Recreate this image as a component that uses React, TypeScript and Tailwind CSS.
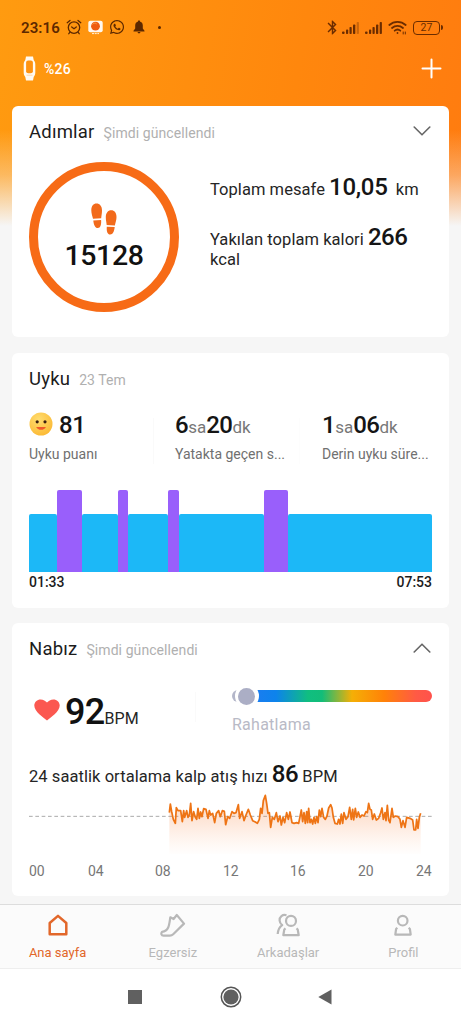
import type { ReactNode } from 'react';
import { FaWhatsapp } from 'react-icons/fa';
import { MdBluetooth } from 'react-icons/md';

/* Heart-rate samples in thirds of a pixel: [x, y]. */
const PULSE: [number, number][] = [
  [421, 62], [424, 36], [428, 59], [433, 82], [439, 94], [442, 47], [447, 56], [455, 56], [460, 89], [464, 56],
  [467, 76], [473, 56], [477, 76], [481, 69], [485, 34], [489, 86], [494, 59], [499, 76], [503, 82], [507, 49],
  [511, 79], [515, 60], [519, 74], [524, 50], [531, 52], [537, 79], [541, 56], [545, 69], [551, 64], [557, 92],
  [562, 64], [569, 56], [574, 74], [580, 56], [586, 58], [590, 98], [596, 74], [602, 79], [609, 59], [615, 64],
  [621, 62], [628, 38], [632, 79], [639, 59], [645, 86], [651, 69], [658, 52], [664, 69], [671, 86], [679, 90],
  [685, 94], [691, 82], [695, 49], [699, 64], [703, 26], [709, 10], [713, 34], [717, 64], [721, 62], [725, 106],
  [730, 76], [736, 82], [742, 62], [747, 89], [753, 72], [757, 99], [762, 76], [767, 92], [773, 62], [778, 82],
  [783, 60], [789, 92], [795, 94], [803, 92], [809, 94], [813, 74], [817, 54], [821, 89], [825, 62], [829, 94],
  [833, 59], [836, 92], [839, 49], [843, 92], [847, 82], [851, 96], [855, 76], [859, 94], [863, 74], [867, 92],
  [871, 54], [875, 74], [879, 49], [884, 76], [889, 82], [894, 72], [899, 48], [905, 38], [909, 48], [913, 76],
  [918, 94], [925, 96], [929, 82], [933, 96], [937, 66], [941, 94], [945, 62], [951, 82], [957, 74], [962, 46],
  [967, 82], [971, 52], [974, 84], [979, 49], [983, 76], [988, 60], [993, 76], [999, 69], [1005, 72], [1011, 59],
  [1015, 62], [1019, 34], [1023, 52], [1027, 54], [1031, 82], [1036, 66], [1042, 84], [1049, 79], [1055, 62],
  [1059, 48], [1063, 82], [1068, 62], [1071, 86], [1075, 40], [1079, 84], [1083, 92], [1089, 49], [1093, 76],
  [1099, 72], [1107, 74], [1113, 82], [1117, 106], [1122, 86], [1128, 106], [1133, 76], [1143, 79], [1148, 82],
  [1151, 84], [1155, 114], [1160, 114], [1163, 82], [1167, 109], [1171, 76], [1175, 64],
];
const PULSE_LINE = 'M' + PULSE.map(([x, y]) => `${x} ${y}`).join('L');

function Signal({ dim = false }: { dim?: boolean }) {
  return (
    <svg width="18" height="14" viewBox="0 0 18 14" fill="#6b2c00">
      <rect x="0" y="10.5" width="2.6" height="2.5" rx="1" />
      <rect x="4" y="8.5" width="2.2" height="4.5" rx=".8" />
      <rect x="7.5" y="6" width="2.2" height="7" rx=".8" />
      <rect x="11" y="3.5" width="2.3" height="9.5" rx=".8" />
      <rect x="14.7" y="1" width="2.2" height="12" rx=".8" opacity={dim ? 0.35 : 1} />
    </svg>
  );
}

function StatusBar() {
  return (
    <div className="flex h-[54px] items-center pl-[21px] pr-[18px] pt-px text-[#5c2800]">
      <span className="w-[45px] text-[15px] font-semibold leading-5 tracking-[0.1px]">23:16</span>
      <svg className="-mt-px" width="16" height="16" viewBox="0 0 16 16" fill="none" stroke="#5c2800" strokeWidth="1.3" strokeLinecap="round">
        <circle cx="8" cy="8.6" r="5.7" />
        <path d="M1.2 3.7 4 1.5M14.8 3.7 12 1.5M5.7 8l2.3 1.7L10.3 8M4 13.2l-1.2 1.5M12 13.2l1.2 1.5" />
      </svg>
      <svg className="ml-[6px] -mt-px" width="15" height="15" viewBox="0 0 15 15">
        <rect x=".3" y=".8" width="14.4" height="11.4" rx="2" fill="#fff7ee" />
        <circle cx="7.5" cy="6.2" r="4.4" fill="#ee5a12" />
        <path d="M4.5 4.5c1-1.6 3-1.8 4.2-.6" stroke="#ffa24a" fill="none" />
        <path d="M4 13.6h7" stroke="#fff0dd" strokeWidth="1" strokeDasharray="2 .7" />
      </svg>
      <FaWhatsapp size={16} className="ml-[6px] -mt-px" />
      <svg className="ml-[8px] -mt-px" width="12" height="14" viewBox="0 0 12 14" fill="#5c2800">
        <path d="M6 .5c.8 0 1.200.5 1.200 1.200C9 2.200 9.800 3.600 9.800 5.400v3.200L11.500 10.800v.6H.5v-.6l1.700-2.200V5.400C2.200 3.600 3 2.200 4.800 1.700 4.800 1 5.200.5 6 .5ZM4.500 12.100h3c-.2.900-.8 1.400-1.500 1.400s-1.300-.5-1.500-1.400Z" />
      </svg>
      <span className="ml-[13px] size-[3px] rounded-full bg-[#5c2800]" />
      <div className="ml-auto flex items-center">
        <MdBluetooth size={17} color="#6b2c00" />
        <span className="ml-[1px]"><Signal dim /></span>
        <span className="ml-[5px]"><Signal /></span>
        <svg className="ml-[5px]" width="19" height="15" viewBox="0 0 19 15" fill="none" stroke="#6b2c00" strokeWidth="1.8" strokeLinecap="round">
          <path d="M1.300 5c4.700-4.300 11.700-4.300 16.400 0M4 8c3.200-2.900 7.800-2.900 11 0M6.700 10.700c1.700-1.500 3.900-1.500 5.600 0" />
          <circle cx="9.500" cy="13" r=".9" fill="#6b2c00" stroke="none" />
          <path d="M15.200 12v2M17.300 12v2" strokeWidth="1" />
        </svg>
        <span className="ml-[6px] flex h-[14px] w-[27px] items-center justify-center rounded-[4px] border-[1.500px] border-[#6b2c00] text-[10.500px] leading-[10px] text-[#6b2c00]">27</span>
        <span className="ml-px h-[5px] w-[2px] rounded-r-sm bg-[#6b2c00]" />
      </div>
    </div>
  );
}

function Header() {
  return (
    <div className="flex h-[28px] items-center pl-[23px] pr-[19px]">
      <svg width="13" height="25" viewBox="0 0 13 25">
        <path d="M3 .5h7l.7 3.500C12 5.500 12.300 7 12.300 9v7c0 2-.3 3.500-1.600 5L10 24.500H3L2.300 21C1 19.500.7 18 .7 16V9c0-2 .3-3.500 1.600-5Z" fill="#fffaf2" />
        <rect x="3.100" y="4.500" width="6.800" height="12.700" rx="2" fill="#ff9412" />
        <path d="M3.500 19.200h6" stroke="#ffcf96" strokeWidth=".8" />
      </svg>
      <span className="ml-[8px] mt-[2px] text-[14px] font-medium leading-5 tracking-[0.2px] text-white">%26</span>
      <svg className="ml-auto" width="21" height="21" viewBox="0 0 21 21" stroke="#fff" strokeWidth="2" strokeLinecap="round">
        <path d="M10.500 1.500v18M1.500 10.500h18" />
      </svg>
    </div>
  );
}

function CardHeader({ title, note, chevron }: { title: string; note: string; chevron?: 'up' | 'down' }) {
  return (
    <div className="flex h-5 items-center">
      <div className="flex items-baseline">
        <h2 className="text-[18.500px] leading-5 tracking-[0.2px] text-[#1c1c1c]">{title}</h2>
        <span className="ml-[9px] text-[14px] leading-5 tracking-[0.080px] text-[#b0b0b0]">{note}</span>
      </div>
      {chevron && (
        <svg className="-mt-[2px] ml-auto mr-[1px]" width="18" height="10" viewBox="0 0 18 10" fill="none" stroke="#666" strokeWidth="1.600" strokeLinecap="round" strokeLinejoin="round">
          <path d={chevron === 'down' ? 'M1.200 1 9 8.800 16.800 1' : 'M1.200 9 9 1.200 16.800 9'} />
        </svg>
      )}
    </div>
  );
}

function StepsCard() {
  return (
    <section className="h-[231px] rounded-[6px] bg-white px-[17px] pt-4">
      <CardHeader title="Adımlar" note="Şimdi güncellendi" chevron="down" />
      <div className="mt-5 flex gap-[31px]">
        <div className="flex size-[150px] shrink-0 flex-col items-center rounded-full border-[9px] border-[#f76b16] pt-[32px]">
          <svg width="26" height="32" viewBox="0 0 26 32" fill="#f26a1b">
            <path d="M5.500.500C8.800.500 11 3.200 11 7.500c0 3-.6 5.400-.8 7.700L2 15.700C1.400 13 .3 10.500.3 7.300.3 3 2.400.500 5.500.500ZM2.300 17.400l7.800-.4c.4 4.500-.6 8-3.300 8-2.800 0-4.100-3.500-4.500-7.600Z" />
            <path d="M20.200 7.200c3.200 0 5.300 2.600 5.300 6.900 0 3.100-1 5.600-1.600 8.300l-8.200-.5c-.2-2.300-.9-4.700-.9-7.700 0-4.300 2.100-7 5.400-7ZM15.800 23.700l7.900.4c-.4 4-1.700 7.500-4.500 7.500-2.700 0-3.800-3.400-3.400-7.900Z" />
          </svg>
          <span className="mt-[5px] text-[28.500px] font-medium leading-8 tracking-[-0.4px] text-[#111]">15128</span>
        </div>
        <div className="pt-[15px] text-[16.500px] leading-5 tracking-[0.050px] text-[#252525]">
          <p className="whitespace-nowrap">
            Toplam mesafe <span className="text-[24px] font-medium leading-5 tracking-[-0.300px] text-[#151515]">10,05</span>&nbsp; km
          </p>
          <p className="mt-[27px]">
            Yakılan toplam kalori <span className="text-[24px] font-medium leading-5 tracking-[-0.500px] text-[#151515]">266</span>
            <br />
            kcal
          </p>
        </div>
      </div>
    </section>
  );
}

function Stat({ label, children }: { label: string; children: ReactNode }) {
  return (
    <div>
      <div className="flex h-7 items-baseline text-[24px] font-medium leading-7 tracking-[-0.500px] text-[#151515]">{children}</div>
      <div className="mt-[5px] whitespace-nowrap text-[14px] leading-5 text-[#707070]">{label}</div>
    </div>
  );
}

function Unit({ children }: { children: string }) {
  return <span className="text-[17px] font-normal tracking-normal text-[#777]">{children}</span>;
}

function Smiley() {
  return (
    <svg className="-mt-[2px] mr-[6px] self-center" width="24" height="24" viewBox="0 0 24 24">
      <defs>
        <radialGradient id="face" cx=".4" cy=".3" r=".8">
          <stop offset="0" stopColor="#ffdd70" />
          <stop offset="1" stopColor="#fbb62f" />
        </radialGradient>
      </defs>
      <circle cx="12" cy="12" r="11.500" fill="url(#face)" />
      <circle cx="8.200" cy="9.800" r="1.600" fill="#3b1f10" />
      <circle cx="16" cy="9.800" r="1.600" fill="#3b1f10" />
      <path d="M7.200 15h9.700c-.8 1.900-2.600 2.800-4.800 2.800S8 16.900 7.200 15Z" fill="#ef5a2a" />
    </svg>
  );
}

function SleepCard() {
  return (
    <section className="mt-4 h-[255px] rounded-[6px] bg-white px-[17px] pt-4">
      <CardHeader title="Uyku" note="23 Tem" />
      <div className="mt-[22px] grid grid-cols-[124px_22px_124px_23px_1fr]">
        <Stat label="Uyku puanı"><Smiley />81</Stat>
        <span className="mt-[7px] h-[46px] w-px bg-[#fafafa]" />
        <Stat label="Yatakta geçen s...">6<Unit>sa</Unit>20<Unit>dk</Unit></Stat>
        <span className="mt-[7px] h-[46px] w-px bg-[#fdfdfd]" />
        <Stat label="Derin uyku süre...">1<Unit>sa</Unit>06<Unit>dk</Unit></Stat>
      </div>
      <div className="mt-[26px] flex h-[82px] items-end">
        <span className="h-[58.500px] w-[27.500px] rounded-t-[2px] bg-[#1cb8f7]" />
        <span className="h-full w-[25.500px] rounded-t-[2px] bg-[#995ffb]" />
        <span className="h-[58.500px] w-[36px] rounded-t-[2px] bg-[#1cb8f7]" />
        <span className="h-full w-[10px] rounded-t-[2px] bg-[#995ffb]" />
        <span className="h-[58.500px] w-[40px] rounded-t-[2px] bg-[#1cb8f7]" />
        <span className="h-full w-[11px] rounded-t-[2px] bg-[#995ffb]" />
        <span className="h-[58.500px] w-[84.500px] rounded-t-[2px] bg-[#1cb8f7]" />
        <span className="h-full w-[24.500px] rounded-t-[2px] bg-[#995ffb]" />
        <span className="h-[58.500px] flex-1 rounded-t-[2px] bg-[#1cb8f7]" />
      </div>
      <div className="flex justify-between text-[14px] font-medium leading-5 text-[#1c1c1c]">
        <span>01:33</span>
        <span>07:53</span>
      </div>
    </section>
  );
}

function PulseCard() {
  return (
    <section className="mt-[15px] h-[273px] rounded-[6px] bg-white px-[17px] pt-4">
      <CardHeader title="Nabız" note="Şimdi güncellendi" chevron="up" />
      <div className="mt-[33px] flex h-10">
        <div className="flex w-[166px] items-baseline pl-[5px]">
          <svg className="mr-[5px]" width="26" height="26" viewBox="0 0 26 26">
            <path d="M13 22.600C9.500 19.500.3 13.800.3 7.600.3 3.900 3.200 1.400 6.600 1.400c2.700 0 5 1.300 6.400 3.200 1.400-1.900 3.700-3.200 6.400-3.200 3.400 0 6.300 2.500 6.300 6.200 0 6.200-9.200 11.900-12.700 15Z" fill="#fb5850" />
          </svg>
          <span className="text-[36px] font-medium leading-10 tracking-[-0.700px] text-[#111]">92</span>
          <span className="text-[16px] leading-5 tracking-[0.100px] text-[#252525]">BPM</span>
        </div>
        <span className="h-[30px] w-px bg-[#fafafa]" />
        <div className="ml-auto w-[200px]">
          <div className="relative -mt-[2px] h-[12px] rounded-full bg-[linear-gradient(90deg,#b3b6c9_0,#b3b6c9_6%,#1a7df0_12%,#0d83ec_22%,#10be80_38%,#12bd79_45%,#f5af06_60%,#ff8208_76%,#ff5a45_92%,#ff524c_100%)]">
            <span className="absolute -top-[6px] left-[2.500px] flex size-[24px] items-center justify-center rounded-full bg-white">
              <span className="size-[17px] rounded-full bg-[#abaec5]" />
            </span>
          </div>
          <div className="mt-[13px] text-[16px] leading-5 tracking-[0.250px] text-[#b9bac6]">Rahatlama</div>
        </div>
      </div>
      <p className="mt-8 h-[28px] whitespace-nowrap text-[16.500px] leading-5 tracking-[0.060px] text-[#252525]">
        24 saatlik ortalama kalp atış hızı <span className="text-[24px] font-medium leading-5 tracking-[-0.400px] text-[#151515]">86</span> BPM
      </p>
      <svg className="block" width="404" height="62" viewBox="0 0 1212 186">
        <defs>
          <linearGradient id="pulse" x1="0" y1="0" x2="0" y2="1">
            <stop offset="0" stopColor="#f26a12" stopOpacity=".3" />
            <stop offset=".45" stopColor="#f88a4a" stopOpacity=".2" />
            <stop offset="1" stopColor="#ffb080" stopOpacity="0" />
          </linearGradient>
        </defs>
        <path d="M0 73H1209" stroke="#aaa" strokeWidth="3" strokeDasharray="11 8" />
        <path d={`${PULSE_LINE}V194H421Z`} fill="url(#pulse)" />
        <path d={PULSE_LINE} fill="none" stroke="#ee7415" strokeWidth="5.200" strokeLinejoin="round" />
      </svg>
      <div className="mt-[7px] grid grid-cols-[59px_67px_68px_67px_68px_58px_1fr] text-[14px] leading-5 text-[#777]">
        <span>00</span><span>04</span><span>08</span><span>12</span><span>16</span><span>20</span><span>24</span>
      </div>
    </section>
  );
}

function Tab({ label, active = false, children }: { label: string; active?: boolean; children: ReactNode }) {
  return (
    <div className={active ? 'flex flex-1 flex-col items-center text-[#e2672a]' : 'flex flex-1 flex-col items-center text-[#b8b8b8]'}>
      <svg className="mt-2" width="26" height="26" viewBox="0 0 26 26" fill="none" stroke="currentColor" strokeWidth="2.200" strokeLinejoin="round">
        {children}
      </svg>
      <span className="mt-1 text-[13px] leading-5">{label}</span>
    </div>
  );
}

export default function App() {
  return (
    <div className="flex h-[1024px] w-[461px] flex-col overflow-hidden bg-[#f6f6f6] font-['Roboto','Noto_Sans',sans-serif]">
      <div className="flex flex-1 flex-col bg-[linear-gradient(180deg,rgba(246,246,246,0)_130px,rgba(246,246,246,0.35)_175px,#f6f6f6_226px),linear-gradient(100deg,#ff9b10_0%,#ff870d_50%,#ff7411_100%)]">
        <StatusBar />
        <Header />
        <main className="mt-6 px-3">
          <StepsCard />
          <SleepCard />
          <PulseCard />
        </main>
      </div>
      <nav className="flex h-[65px] border-b border-t border-b-[#eeeeee] border-t-[#dddddd] bg-[#fbfbfb]">
        <Tab label="Ana sayfa" active>
          <path d="M4.700 21.300V10L13 2.900l8.300 7.100v11.300Z" strokeWidth="2.500" />
        </Tab>
        <Tab label="Egzersiz">
          <path d="M10.300 4.300 13.600 6 16.800 2 24 10.600 13.200 21.200C12.200 22.200 11.300 22.600 9.800 22.600H3.500C1.300 22.600.8 20.500 2 18.800 5 18.600 7 17.200 8.200 14.500 9.300 12 9.600 9 10.300 4.300Z" />
        </Tab>
        <Tab label="Arkadaşlar">
          <circle cx="16" cy="7.900" r="5" />
          <path d="M10.500 15.400 9.300 16.500 8.300 22.200H23.700L22.700 16.500 21.500 15.400M11.500 2.200C7.500 1 4.300 4 4.600 7.500c.1 2.200 1.200 3.500 2.600 4.600C4.300 14 3 16.500 2.700 21" />
        </Tab>
        <Tab label="Profil">
          <circle cx="12.700" cy="7.700" r="4.800" />
          <path d="M7.300 14.800 6.100 16 5.300 21.600h15.400L19.900 16 18.700 14.800" />
        </Tab>
      </nav>
      <div className="flex h-[55px] items-center justify-center bg-white pr-px">
        <span className="size-[14px] bg-[#606060]" />
        <svg className="ml-[78px]" width="22" height="22" viewBox="0 0 22 22">
          <circle cx="11" cy="11" r="9.700" fill="none" stroke="#555" strokeWidth="1.500" />
          <circle cx="11" cy="11" r="7.600" fill="#606060" />
        </svg>
        <svg className="ml-[76px]" width="14" height="16" viewBox="0 0 14 16">
          <path d="M13.500.500v15L.3 8Z" fill="#606060" />
        </svg>
      </div>
    </div>
  );
}
